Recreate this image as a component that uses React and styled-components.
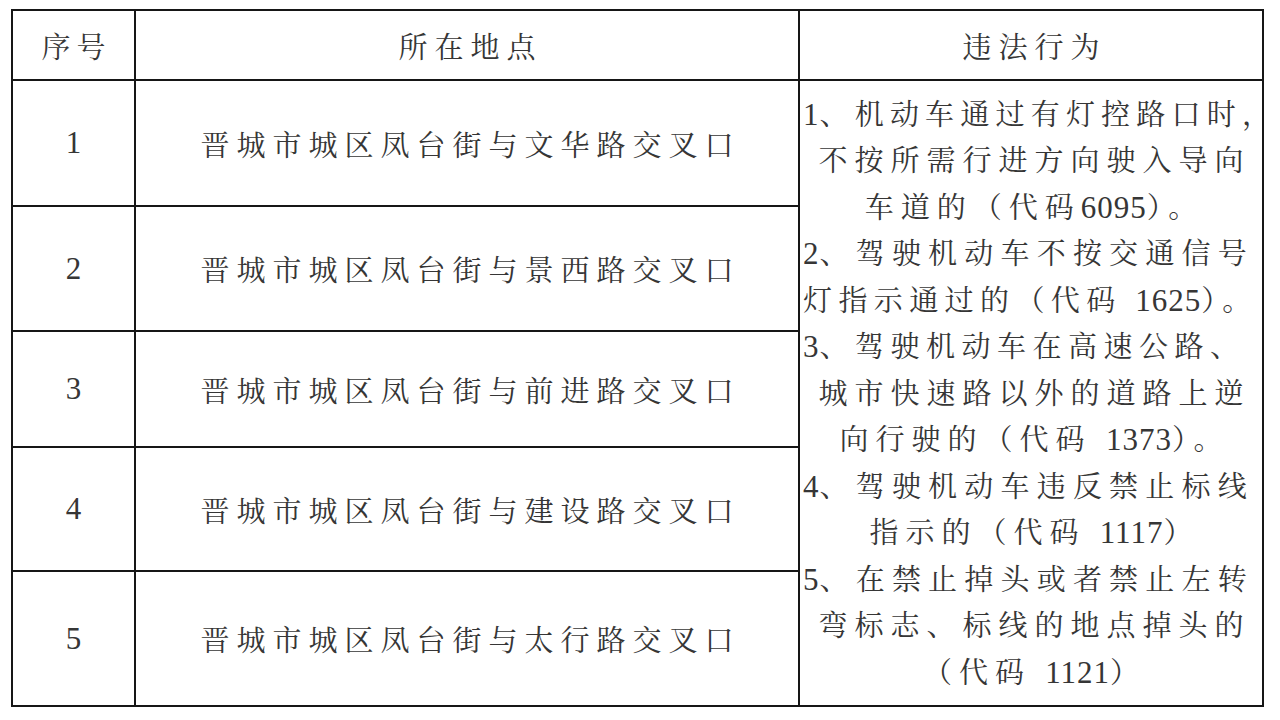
import styled, { createGlobalStyle } from 'styled-components'

const GlobalStyle = createGlobalStyle`
  html, body {
    margin: 0;
    padding: 0;
    background: #ffffff;
  }
  body {
    font-family: "Liberation Serif", "Noto Serif CJK SC", "Noto Sans CJK SC", serif;
    color: #363636;
  }
`

const Page = styled.div`
  width: 1280px;
  height: 720px;
  padding: 9px 0 0 11px;
  box-sizing: border-box;
  background: #ffffff;
`

const Table = styled.div`
  display: grid;
  grid-template-columns: 121px 662px 462px;
  grid-template-rows: 68px 124px 123px 114px 122px 133px;
  gap: 2px;
  padding: 2px;
  width: max-content;
  background: #161616;
`

const Cell = styled.div`
  background: #ffffff;
  display: flex;
  align-items: center;
  justify-content: center;
  font-size: 29px;
  letter-spacing: ${(p) => p.$spacing || 7}px;
  padding-left: ${(p) => p.$spacing || 7}px;
  white-space: nowrap;
  box-sizing: border-box;
`

const Num = styled(Cell)`
  font-size: 31px;
  letter-spacing: 0;
  padding-left: 0;
`

const Rules = styled.div`
  grid-column: 3;
  grid-row: 2 / span 5;
  background: #ffffff;
  display: flex;
  flex-direction: column;
  justify-content: center;
  padding-top: 2px;
  font-size: 29px;
  line-height: 46.5px;
  white-space: nowrap;
`

const Line = styled.div`
  text-align: ${(p) => (p.$left ? 'left' : 'center')};
  letter-spacing: ${(p) => p.$spacing}px;
  padding-left: ${(p) => (p.$left ? 3 : p.$spacing)}px;
`

const Digits = styled.span`
  font-size: 31px;
  letter-spacing: 1px;
`

const rows = [
  ['1', '晋城市城区凤台街与文华路交叉口'],
  ['2', '晋城市城区凤台街与景西路交叉口'],
  ['3', '晋城市城区凤台街与前进路交叉口'],
  ['4', '晋城市城区凤台街与建设路交叉口'],
  ['5', '晋城市城区凤台街与太行路交叉口'],
]

const lines = [
  { t: '1、机动车通过有灯控路口时，', left: true, s: 6.2 },
  { t: '不按所需行进方向驶入导向', s: 7 },
  { t: '车道的（代码6095）。', s: 7 },
  { t: '2、驾驶机动车不按交通信号', left: true, s: 7.2 },
  { t: '灯指示通过的（代码 1625）。', left: true, s: 6.4 },
  { t: '3、驾驶机动车在高速公路、', left: true, s: 6.5 },
  { t: '城市快速路以外的道路上逆', s: 7 },
  { t: '向行驶的（代码 1373）。', s: 7 },
  { t: '4、驾驶机动车违反禁止标线', left: true, s: 7.2 },
  { t: '指示的（代码 1117）', s: 7 },
  { t: '5、在禁止掉头或者禁止左转', left: true, s: 7.2 },
  { t: '弯标志、标线的地点掉头的', s: 7 },
  { t: '（代码 1121）', s: 7 },
]

// keep runs of digits tight, as in the printed table
const renderText = (text) =>
  text.split(/(\d+)/).map((part, i) =>
    /^\d+$/.test(part) ? <Digits key={i}>{part}</Digits> : part
  )

export default function App() {
  return (
    <>
      <GlobalStyle />
      <Page>
        <Table>
          <Cell $spacing={6}>序号</Cell>
          <Cell $spacing={7}>所在地点</Cell>
          <Cell $spacing={7}>违法行为</Cell>
          {rows.map(([n, place]) => [
            <Num key={'n' + n}>{n}</Num>,
            <Cell key={'p' + n}>{place}</Cell>,
          ])}
          <Rules>
            {lines.map((l, i) => (
              <Line key={i} $left={l.left} $spacing={l.s}>
                {renderText(l.t)}
              </Line>
            ))}
          </Rules>
        </Table>
      </Page>
    </>
  )
}
